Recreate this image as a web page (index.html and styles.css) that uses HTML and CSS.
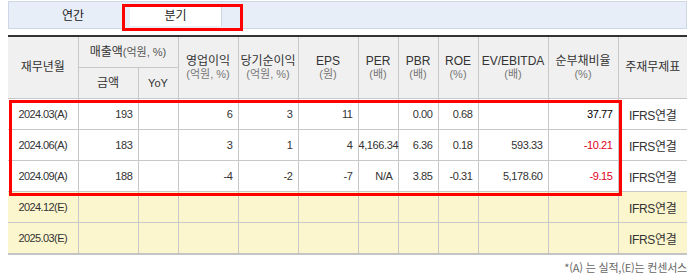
FILE: index.html
```html
<!DOCTYPE html>
<html lang="ko">
<head>
<meta charset="utf-8">
<title>재무정보</title>
<link rel="stylesheet" href="styles.css">
</head>
<body>
<div class="wrap">
  <div class="tabs">
    <div class="tab">연간</div>
    <div class="tab active">분기</div>
  </div>
  <div class="hl hl-tab"></div>

  <table class="fin">
    <colgroup>
      <col class="c70"><col class="c60"><col class="c40"><col class="c60"><col class="c60"><col class="c60">
      <col class="c40"><col class="c40"><col class="c40"><col class="c70"><col class="c70"><col class="c69">
    </colgroup>
    <thead>
      <tr class="h1">
        <th rowspan="2" class="big">재무년월</th>
        <th colspan="2"><span class="big">매출액</span><span class="unit">(억원, %)</span></th>
        <th rowspan="2"><span class="big">영업이익</span><br><span class="sub">(억원, %)</span></th>
        <th rowspan="2"><span class="big">당기순이익</span><br><span class="sub">(억원, %)</span></th>
        <th rowspan="2"><span class="big">EPS</span><br><span class="sub">(원)</span></th>
        <th rowspan="2"><span class="big">PER</span><br><span class="sub">(배)</span></th>
        <th rowspan="2"><span class="big">PBR</span><br><span class="sub">(배)</span></th>
        <th rowspan="2"><span class="big">ROE</span><br><span class="sub">(%)</span></th>
        <th rowspan="2"><span class="big">EV/EBITDA</span><br><span class="sub">(배)</span></th>
        <th rowspan="2"><span class="big">순부채비율</span><br><span class="sub">(%)</span></th>
        <th rowspan="2" class="big">주재무제표</th>
      </tr>
      <tr class="h2">
        <th class="big">금액</th>
        <th class="yoy">YoY</th>
      </tr>
    </thead>
    <tbody>
      <tr>
        <td class="dt">2024.03(A)</td><td class="n">193</td><td class="n"></td><td class="n">6</td><td class="n">3</td><td class="n">11</td>
        <td class="n"></td><td class="n">0.00</td><td class="n">0.68</td><td class="n"></td><td class="n dark">37.77</td><td class="ifrs">IFRS연결</td>
      </tr>
      <tr>
        <td class="dt">2024.06(A)</td><td class="n">183</td><td class="n"></td><td class="n">3</td><td class="n">1</td><td class="n">4</td>
        <td class="n tight">4,166.34</td><td class="n">6.36</td><td class="n">0.18</td><td class="n">593.33</td><td class="n neg">-10.21</td><td class="ifrs">IFRS연결</td>
      </tr>
      <tr>
        <td class="dt">2024.09(A)</td><td class="n">188</td><td class="n"></td><td class="n">-4</td><td class="n">-2</td><td class="n">-7</td>
        <td class="n">N/A</td><td class="n">3.85</td><td class="n">-0.31</td><td class="n">5,178.60</td><td class="n neg">-9.15</td><td class="ifrs">IFRS연결</td>
      </tr>
      <tr class="est">
        <td class="dt">2024.12(E)</td><td></td><td></td><td></td><td></td><td></td>
        <td></td><td></td><td></td><td></td><td></td><td class="ifrs">IFRS연결</td>
      </tr>
      <tr class="est">
        <td class="dt">2025.03(E)</td><td></td><td></td><td></td><td></td><td></td>
        <td></td><td></td><td></td><td></td><td></td><td class="ifrs">IFRS연결</td>
      </tr>
    </tbody>
  </table>
  <div class="hl hl-rows"></div>

  <p class="note">*(A) 는 실적,(E)는 컨센서스</p>
</div>
</body>
</html>
```

FILE: styles.css
```css
html, body {
  margin: 0;
  padding: 0;
  background: #ffffff;
}

.wrap {
  position: relative;
  padding: 1px 8px 0 8px;
  font-family: "Liberation Sans", "Noto Sans CJK KR", sans-serif;
  color: #333333;
}

.tabs {
  display: flex;
  box-sizing: border-box;
  height: 28px;
  padding: 2px 0 2px 7px;
  background: #e8eef8;
  border: 1px solid #cdd7e8;
}

.tab {
  height: 22px;
  line-height: 22px;
  text-align: center;
  font-family: "Noto Sans CJK KR", sans-serif;
  font-size: 12px;
  color: #222222;
}

.tab:first-child {
  width: 114px;
}

.tab.active {
  width: 91px;
  background: #ffffff;
  border-right: 1px solid #cdd5e3;
}

.hl {
  position: absolute;
  box-sizing: border-box;
  border: 3px solid #ff0000;
  pointer-events: none;
}

.hl-tab {
  left: 122px;
  top: 4px;
  width: 121px;
  height: 27px;
}

.hl-rows {
  left: 9px;
  top: 100px;
  width: 613px;
  height: 96px;
}

.fin {
  margin-top: 6px;
  width: 679px;
  table-layout: fixed;
  border-collapse: collapse;
  border-top: 2px solid #333333;
  border-bottom: 2px solid #c4c4c4;
  font-size: 11px;
}

.c70 { width: 70px; }
.c60 { width: 60px; }
.c40 { width: 40px; }
.c69 { width: 69px; }

.fin th,
.fin td {
  border: 1px solid #c8c8c8;
  padding: 0;
  white-space: nowrap;
}

.fin tr > :first-child { border-left: none; }
.fin tr > :last-child { border-right: none; }
.fin .h2 > :first-child { border-left: 1px solid #c8c8c8; }

.fin th {
  background: #f0f0f0;
  font-weight: normal;
  color: #333333;
  line-height: 13px;
  font-family: "Liberation Sans", "Noto Sans CJK KR", sans-serif;
}

.fin .h1 th { height: 30px; }
.fin .h2 th { height: 30px; }

.big {
  font-size: 12px;
  color: #333333;
}

.unit {
  font-size: 11px;
  color: #555555;
}

.sub {
  font-size: 11px;
  color: #777777;
}

.yoy {
  font-size: 11px;
  color: #444444;
}

.fin td {
  height: 30px;
  color: #333333;
  letter-spacing: -0.4px;
}

.fin td.n {
  text-align: right;
  padding-right: 5px;
}

.fin td.tight {
  padding-right: 0;
}

.fin td.dt {
  text-align: center;
  letter-spacing: -0.6px;
}

.fin td.ifrs {
  text-align: center;
  font-size: 12px;
  letter-spacing: -0.3px;
}

.fin td.neg { color: #e2001a; }
.fin td.dark { color: #000000; }

.fin .est td { background: #fcf6ce; }

.note {
  margin: 4px 0 0 0;
  text-align: right;
  font-family: "Noto Sans CJK KR", sans-serif;
  font-size: 11px;
  color: #666666;
  letter-spacing: -0.2px;
}
```
